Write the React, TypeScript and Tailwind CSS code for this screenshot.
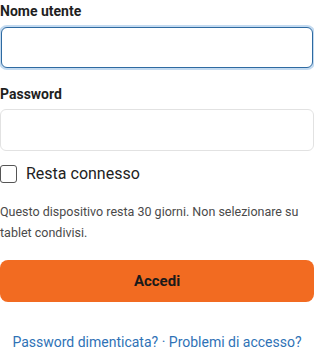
import React from "react";

export default function App() {
  const font = { fontFamily: "Roboto, 'Noto Sans', sans-serif" };
  return (
    <div className="w-[314px] bg-white text-[#1f1f1f]" style={font}>
      <div className="flex flex-col">
        <label className="text-[14px] font-bold leading-[20px] pt-[1px]">Nome utente</label>
        <div className="mt-[6px] px-[1px]">
          <input
            className="block w-full h-[41px] rounded-[6px] border border-[#2e6aa1] bg-white outline-none shadow-[0_0_0_2px_#c3daf0]"
            type="text"
          />
        </div>
        <label className="mt-[16px] text-[14px] font-bold leading-[20px]">Password</label>
        <div className="mt-[5px]">
          <input
            className="block w-full h-[42px] rounded-[6px] border border-[#e2e2e2] bg-white outline-none"
            type="password"
          />
        </div>
        <label className="mt-[12px] flex items-center gap-[9px]">
          <span className="w-[17px] h-[18px] rounded-[3px] border border-[#555] bg-white" />
          <span className="text-[16px] leading-[22px] text-[#222]">Resta connesso</span>
        </label>
        <p className="mt-[16px] text-[12.5px] leading-[21px] text-[#4a4a4a]">
          Questo dispositivo resta 30 giorni. Non selezionare su tablet condivisi.
        </p>
        <button className="mt-[17px] h-[42px] w-full rounded-[8px] bg-[#f26b21] text-[15px] font-bold text-[#1a1a1a]">
          Accedi
        </button>
        <div className="mt-[30px] text-center text-[14px] leading-[20px] text-[#2f72b6]">
          <a>Password dimenticata?</a> · <a>Problemi di accesso?</a>
        </div>
      </div>
    </div>
  );
}
